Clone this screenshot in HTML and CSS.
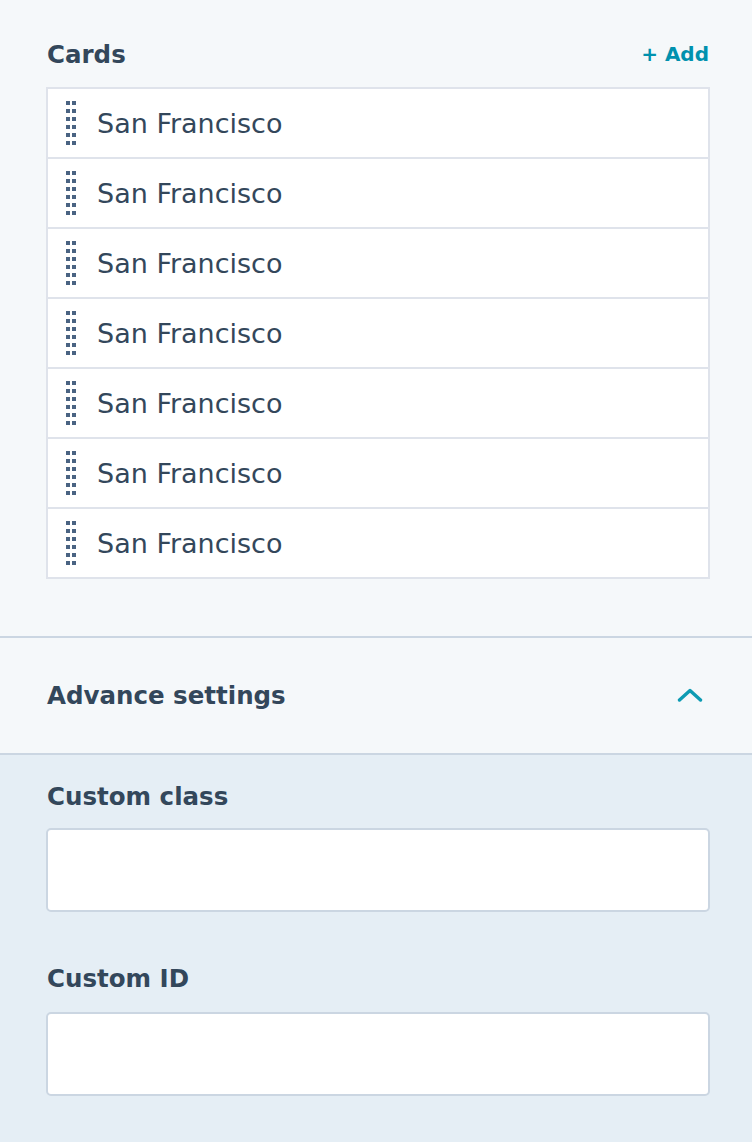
FILE: index.html
```html
<!DOCTYPE html>
<html>
<head>
<meta charset="utf-8">
<link rel="stylesheet" href="styles.css">
</head>
<body>
<section class="cards">
  <div class="cards-head">
    <h2 class="title">Cards</h2>
    <a class="add" href="#">+ Add</a>
  </div>
  <ul class="list">
    <li class="row"><svg class="handle" width="10" height="44" viewBox="0 0 10 44"><g fill="#4a6382"><rect x="0" y="0" width="4" height="4"/><rect x="6" y="0" width="4" height="4"/><rect x="0" y="8" width="4" height="4"/><rect x="6" y="8" width="4" height="4"/><rect x="0" y="16" width="4" height="4"/><rect x="6" y="16" width="4" height="4"/><rect x="0" y="24" width="4" height="4"/><rect x="6" y="24" width="4" height="4"/><rect x="0" y="32" width="4" height="4"/><rect x="6" y="32" width="4" height="4"/><rect x="0" y="40" width="4" height="4"/><rect x="6" y="40" width="4" height="4"/></g></svg><span class="name">San Francisco</span></li>
    <li class="row"><svg class="handle" width="10" height="44" viewBox="0 0 10 44"><g fill="#4a6382"><rect x="0" y="0" width="4" height="4"/><rect x="6" y="0" width="4" height="4"/><rect x="0" y="8" width="4" height="4"/><rect x="6" y="8" width="4" height="4"/><rect x="0" y="16" width="4" height="4"/><rect x="6" y="16" width="4" height="4"/><rect x="0" y="24" width="4" height="4"/><rect x="6" y="24" width="4" height="4"/><rect x="0" y="32" width="4" height="4"/><rect x="6" y="32" width="4" height="4"/><rect x="0" y="40" width="4" height="4"/><rect x="6" y="40" width="4" height="4"/></g></svg><span class="name">San Francisco</span></li>
    <li class="row"><svg class="handle" width="10" height="44" viewBox="0 0 10 44"><g fill="#4a6382"><rect x="0" y="0" width="4" height="4"/><rect x="6" y="0" width="4" height="4"/><rect x="0" y="8" width="4" height="4"/><rect x="6" y="8" width="4" height="4"/><rect x="0" y="16" width="4" height="4"/><rect x="6" y="16" width="4" height="4"/><rect x="0" y="24" width="4" height="4"/><rect x="6" y="24" width="4" height="4"/><rect x="0" y="32" width="4" height="4"/><rect x="6" y="32" width="4" height="4"/><rect x="0" y="40" width="4" height="4"/><rect x="6" y="40" width="4" height="4"/></g></svg><span class="name">San Francisco</span></li>
    <li class="row"><svg class="handle" width="10" height="44" viewBox="0 0 10 44"><g fill="#4a6382"><rect x="0" y="0" width="4" height="4"/><rect x="6" y="0" width="4" height="4"/><rect x="0" y="8" width="4" height="4"/><rect x="6" y="8" width="4" height="4"/><rect x="0" y="16" width="4" height="4"/><rect x="6" y="16" width="4" height="4"/><rect x="0" y="24" width="4" height="4"/><rect x="6" y="24" width="4" height="4"/><rect x="0" y="32" width="4" height="4"/><rect x="6" y="32" width="4" height="4"/><rect x="0" y="40" width="4" height="4"/><rect x="6" y="40" width="4" height="4"/></g></svg><span class="name">San Francisco</span></li>
    <li class="row"><svg class="handle" width="10" height="44" viewBox="0 0 10 44"><g fill="#4a6382"><rect x="0" y="0" width="4" height="4"/><rect x="6" y="0" width="4" height="4"/><rect x="0" y="8" width="4" height="4"/><rect x="6" y="8" width="4" height="4"/><rect x="0" y="16" width="4" height="4"/><rect x="6" y="16" width="4" height="4"/><rect x="0" y="24" width="4" height="4"/><rect x="6" y="24" width="4" height="4"/><rect x="0" y="32" width="4" height="4"/><rect x="6" y="32" width="4" height="4"/><rect x="0" y="40" width="4" height="4"/><rect x="6" y="40" width="4" height="4"/></g></svg><span class="name">San Francisco</span></li>
    <li class="row"><svg class="handle" width="10" height="44" viewBox="0 0 10 44"><g fill="#4a6382"><rect x="0" y="0" width="4" height="4"/><rect x="6" y="0" width="4" height="4"/><rect x="0" y="8" width="4" height="4"/><rect x="6" y="8" width="4" height="4"/><rect x="0" y="16" width="4" height="4"/><rect x="6" y="16" width="4" height="4"/><rect x="0" y="24" width="4" height="4"/><rect x="6" y="24" width="4" height="4"/><rect x="0" y="32" width="4" height="4"/><rect x="6" y="32" width="4" height="4"/><rect x="0" y="40" width="4" height="4"/><rect x="6" y="40" width="4" height="4"/></g></svg><span class="name">San Francisco</span></li>
    <li class="row"><svg class="handle" width="10" height="44" viewBox="0 0 10 44"><g fill="#4a6382"><rect x="0" y="0" width="4" height="4"/><rect x="6" y="0" width="4" height="4"/><rect x="0" y="8" width="4" height="4"/><rect x="6" y="8" width="4" height="4"/><rect x="0" y="16" width="4" height="4"/><rect x="6" y="16" width="4" height="4"/><rect x="0" y="24" width="4" height="4"/><rect x="6" y="24" width="4" height="4"/><rect x="0" y="32" width="4" height="4"/><rect x="6" y="32" width="4" height="4"/><rect x="0" y="40" width="4" height="4"/><rect x="6" y="40" width="4" height="4"/></g></svg><span class="name">San Francisco</span></li>
  </ul>
</section>
<div class="adv-head">
  <h2 class="title">Advance settings</h2>
  <svg class="chev" width="26" height="14" viewBox="0 0 26 14"><path d="M2.5 12 L13 2.5 L23.5 12" fill="none" stroke="#0d9bb3" stroke-width="3.4" stroke-linecap="round" stroke-linejoin="round"/></svg>
</div>
<section class="adv">
  <label class="label">Custom class</label>
  <input class="field" type="text">
  <label class="label label-2">Custom ID</label>
  <input class="field" type="text">
</section>
</body>
</html>
```
FILE: styles.css
```css
* { box-sizing: border-box; }
html, body { margin: 0; padding: 0; }
body {
  background: #f5f8fa;
  font-family: "DejaVu Sans", Verdana, sans-serif;
  color: #33475b;
  width: 752px;
  height: 1142px;
  display: flex;
  flex-direction: column;
}
.cards {
  padding: 34px 42px 57px 46px;
  border-bottom: 2px solid #cbd6e2;
}
.cards-head {
  display: flex;
  align-items: center;
  justify-content: space-between;
  height: 40px;
  margin-bottom: 13px;
}
.title {
  margin: 0 0 0 1px;
  font-size: 24.5px;
  font-weight: 700;
  line-height: 30px;
}
.cards-head .title { margin-top: 2px; }
.add {
  color: #0091ae;
  font-weight: 700;
  font-size: 20px;
  text-decoration: none;
  margin-right: 1px;
}
.list {
  list-style: none;
  margin: 0;
  padding: 0;
  border: 2px solid #dfe3eb;
  background: #fff;
}
.row {
  height: 70px;
  display: flex;
  align-items: center;
  border-top: 2px solid #dfe3eb;
  padding-left: 18px;
}
.row:first-child { height: 68px; border-top: 0; }
.handle {
  flex: none;
  margin-right: 21px;
}
.name {
  font-size: 27px;
  line-height: 30px;
  margin-top: 2px;
}
.adv-head {
  height: 117px;
  padding: 0 49px 0 46px;
  display: flex;
  align-items: center;
  justify-content: space-between;
  border-bottom: 2px solid #cbd6e2;
}
.chev { margin-bottom: 2px; }
.adv {
  flex: 1;
  background: #e5eef5;
  padding: 27px 42px 0 46px;
  display: flex;
  flex-direction: column;
}
.label {
  font-size: 24.5px;
  font-weight: 700;
  line-height: 30px;
  margin-left: 1px;
  margin-bottom: 16px;
}
.label-2 { margin-top: 52px; margin-bottom: 18px; }
.field {
  flex: none;
  height: 84px;
  border: 2px solid #cbd6e2;
  border-radius: 5px;
  background: #fff;
  font-size: 20px;
  padding: 0 14px;
}
```
